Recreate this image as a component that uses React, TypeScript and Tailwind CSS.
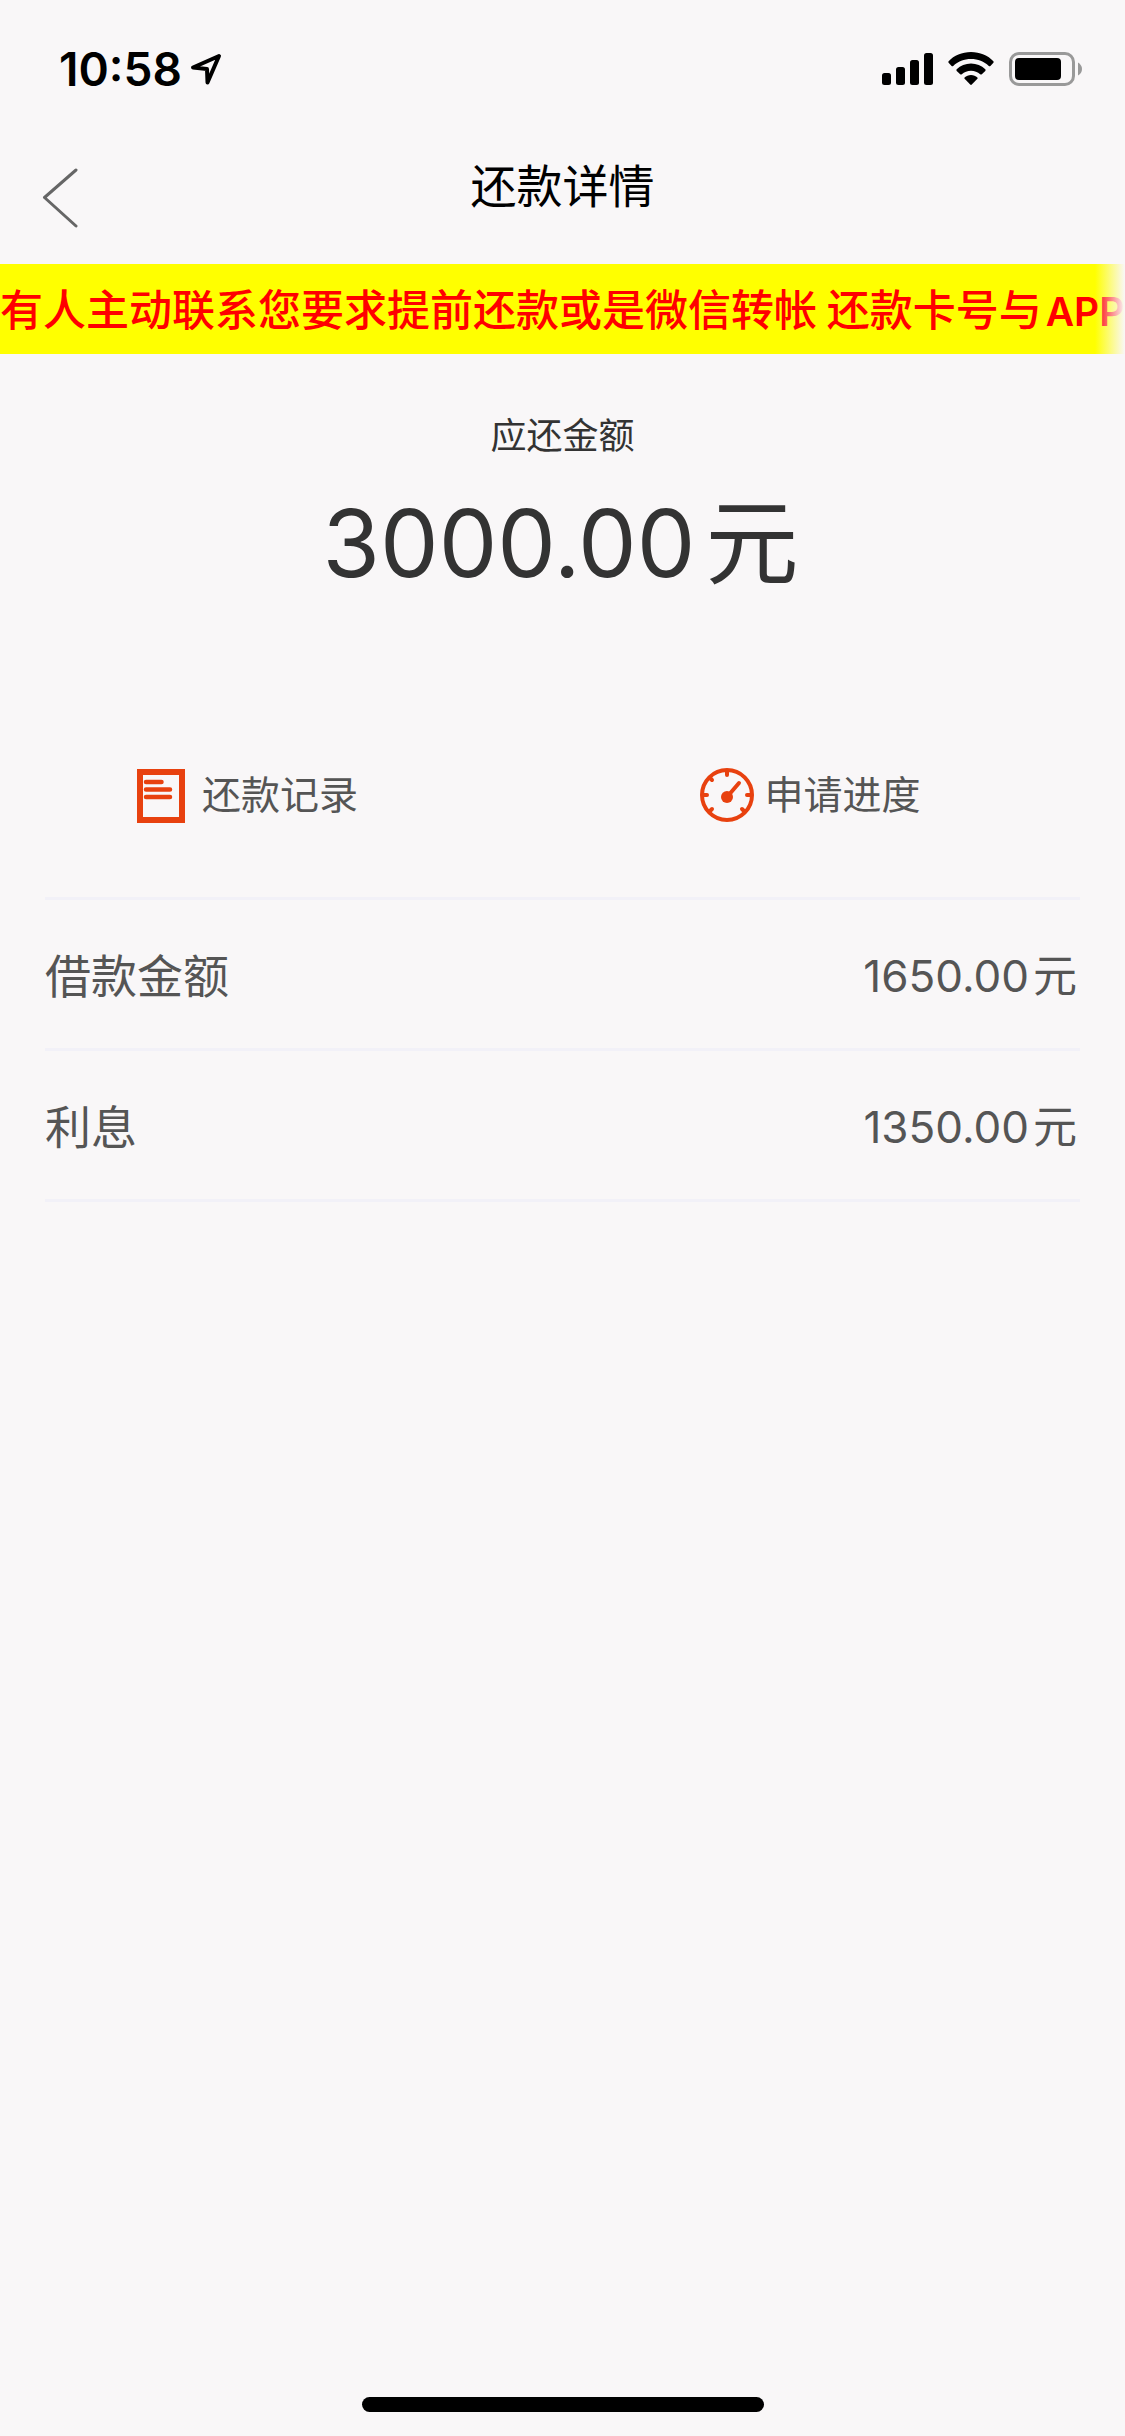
import type { ReactNode } from "react";

interface ActionLinkProps {
  label: string;
  gapClass: string;
  icon: ReactNode;
}

interface DetailRowProps {
  label: string;
  amount: string;
}

function StatusBar() {
  return (
    <div className="flex h-[132px] items-start justify-between pt-[42px] pr-[42px] pl-[59px]">
      <div className="flex items-center gap-2">
        <span className="text-[46px] leading-[54px] font-semibold text-black">10:58</span>
        <svg className="h-[32px] w-[32px]" viewBox="0 0 32 32" fill="none" aria-hidden="true">
          <path
            d="M29 3 3 14.500 17 16 17.500 29.500Z"
            stroke="#000"
            strokeWidth="4"
            strokeLinejoin="round"
          />
        </svg>
      </div>
      <div className="flex h-[54px] items-center gap-[15px]">
        <svg className="h-[34px] w-[51px]" viewBox="0 0 51 34" aria-hidden="true">
          <rect x="0" y="21" width="9" height="12" rx="2.5" />
          <rect x="14" y="15" width="9" height="18" rx="2.5" />
          <rect x="28" y="8" width="9" height="25" rx="2.5" />
          <rect x="42" y="1" width="9" height="32" rx="2.5" />
        </svg>
        <svg className="h-[34px] w-[46px]" viewBox="0 0 46 34" aria-hidden="true">
          <path d="M23 0C14 0 6 3.500 .6 9.200Q0 10 .6 10.800L3.600 13.900Q4.400 14.600 5.200 13.900C10 9.500 16 7 23 7S36 9.500 40.800 13.900Q41.600 14.600 42.400 13.900L45.400 10.800Q46 10 45.400 9.200C40 3.500 32 0 23 0Z" />
          <path d="M23 11.500C17.500 11.500 12.500 13.700 8.700 17.300Q8 18.100 8.700 18.900L12.200 22.300Q13 22.900 13.800 22.300C16.300 20 19.500 18.700 23 18.700S29.700 20 32.200 22.300Q33 22.900 33.800 22.300L37.300 18.900Q38 18.100 37.300 17.300C33.500 13.700 28.500 11.500 23 11.500Z" />
          <path d="M23 23C20.500 23 18.300 23.900 16.600 25.400Q16 26.100 16.600 26.800L22.200 32.600Q23 33.300 23.800 32.600L29.400 26.800Q30 26.100 29.400 25.400C27.700 23.900 25.500 23 23 23Z" />
        </svg>
        <svg className="h-[34px] w-[74px]" viewBox="0 0 74 34" aria-hidden="true">
          <rect x="1.500" y="1.500" width="63" height="31" rx="8.500" fill="none" stroke="#999" strokeWidth="3" />
          <rect x="6" y="6" width="46" height="22" rx="4" />
          <path d="M69 10.500Q73 13 73 17T69 23.500Z" fill="#999" />
        </svg>
      </div>
    </div>
  );
}

function RecordIcon() {
  return (
    <svg className="h-[56px] w-[48px]" viewBox="0 0 48 56" fill="none" stroke="#e8410f" aria-hidden="true">
      <rect x="3" y="5" width="42" height="48" strokeWidth="6" />
      <path d="M9 15H24.500M9 22.500H33M9 30H33" strokeWidth="4.500" strokeLinecap="round" />
    </svg>
  );
}

function GaugeIcon() {
  return (
    <svg className="h-[54px] w-[54px]" viewBox="0 0 54 54" fill="none" stroke="#e8410f" aria-hidden="true">
      <circle cx="27" cy="27" r="25" strokeWidth="4" />
      <path
        d="M27 3V7M3 27H7M51 27H47M10 10 12 12M10 43 12 41M44 43 42 41"
        strokeWidth="4"
        strokeLinecap="round"
      />
      <path d="M27 29 39 15" strokeWidth="4" strokeLinecap="round" />
      <circle cx="27" cy="29" r="6" fill="#e8410f" stroke="none" />
    </svg>
  );
}

function ActionLink({ label, gapClass, icon }: ActionLinkProps) {
  return (
    <a
      href="#"
      className={`flex items-center pl-[137px] text-[39px] leading-[56px] text-[#555] ${gapClass}`}
    >
      {icon}
      <span>{label}</span>
    </a>
  );
}

function DetailRow({ label, amount }: DetailRowProps) {
  return (
    <div className="flex items-center justify-between border-b-[3px] border-[#f2f1f8] pt-[44px] pb-[40px] leading-[64px] text-[#555]">
      <dt className="text-[46px]">{label}</dt>
      <dd className="pr-[3px] text-[44px]">
        {amount}
        <span className="ml-1">元</span>
      </dd>
    </div>
  );
}

export default function App() {
  return (
    <div className="flex min-h-screen flex-col bg-[#f9f7f8] font-['Inter','Noto_Sans_CJK_SC',sans-serif]">
      <StatusBar />

      <header className="grid h-[132px] grid-cols-3 items-start">
        <button type="button" aria-label="返回" className="ml-[42px] mt-[36px] w-[60px]">
          <svg className="h-[60px] w-[36px]" viewBox="0 0 36 60" fill="none" aria-hidden="true">
            <path
              d="M34 2 2.500 29.500 34 58"
              stroke="#666"
              strokeWidth="3"
              strokeLinecap="round"
              strokeLinejoin="round"
            />
          </svg>
        </button>
        <h1 className="mt-[22px] text-center text-[46px] leading-[64px] text-black">还款详情</h1>
      </header>

      <div className="relative h-[90px] overflow-hidden bg-[#ff0] whitespace-nowrap">
        <p className="font-['Noto_Sans_CJK_SC',sans-serif] text-[43px] leading-[86px] font-medium text-[#f00]">
          有人主动联系您要求提前还款或是微信转帐 还款卡号与
          <span className="ml-1 font-['Inter',sans-serif] text-[39px] font-semibold">APP</span>
        </p>
        <div className="absolute inset-y-0 right-0 w-[30px] bg-linear-to-r from-transparent to-[#f9f7f8]" />
      </div>

      <main>
        <section className="pt-[56px] text-center text-[#333]">
          <h2 className="text-[36px] leading-[52px]">应还金额</h2>
          <p className="mt-[17px] pr-1 text-[93px] leading-[128px]">
            3000.00<span className="ml-2.5">元</span>
          </p>
        </section>

        <nav className="mt-[160px] grid grid-cols-2">
          <ActionLink label="还款记录" gapClass="gap-[17px]" icon={<RecordIcon />} />
          <ActionLink label="申请进度" gapClass="gap-[11px]" icon={<GaugeIcon />} />
        </nav>

        <dl className="mx-[45px] mt-[74px] border-t-[3px] border-[#f2f1f8]">
          <DetailRow label="借款金额" amount="1650.00" />
          <DetailRow label="利息" amount="1350.00" />
        </dl>
      </main>

      <div className="mt-auto mb-[24px] h-[15px] w-[402px] self-center rounded-full bg-black" />
    </div>
  );
}
